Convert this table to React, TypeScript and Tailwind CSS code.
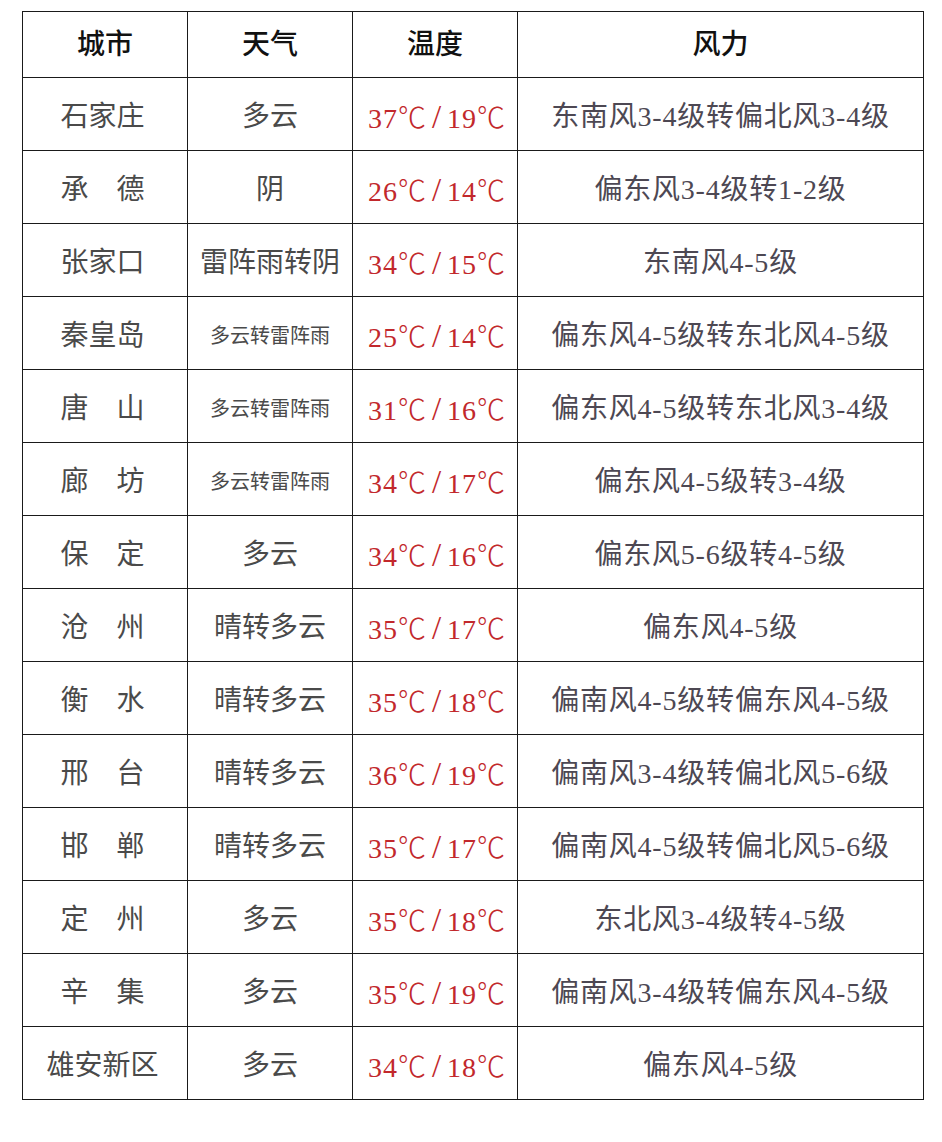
const rows: [string, string, string, string, string, boolean?][] = [
  ['石家庄', '多云', '37', '19', '东南风3-4级转偏北风3-4级'],
  ['承　德', '阴', '26', '14', '偏东风3-4级转1-2级'],
  ['张家口', '雷阵雨转阴', '34', '15', '东南风4-5级'],
  ['秦皇岛', '多云转雷阵雨', '25', '14', '偏东风4-5级转东北风4-5级', true],
  ['唐　山', '多云转雷阵雨', '31', '16', '偏东风4-5级转东北风3-4级', true],
  ['廊　坊', '多云转雷阵雨', '34', '17', '偏东风4-5级转3-4级', true],
  ['保　定', '多云', '34', '16', '偏东风5-6级转4-5级'],
  ['沧　州', '晴转多云', '35', '17', '偏东风4-5级'],
  ['衡　水', '晴转多云', '35', '18', '偏南风4-5级转偏东风4-5级'],
  ['邢　台', '晴转多云', '36', '19', '偏南风3-4级转偏北风5-6级'],
  ['邯　郸', '晴转多云', '35', '17', '偏南风4-5级转偏北风5-6级'],
  ['定　州', '多云', '35', '18', '东北风3-4级转4-5级'],
  ['辛　集', '多云', '35', '19', '偏南风3-4级转偏东风4-5级'],
  ['雄安新区', '多云', '34', '18', '偏东风4-5级'],
]

const serif = { fontFamily: '"Liberation Serif", "Noto Sans CJK SC", serif' }
const cjk = { fontFamily: '"Noto Sans CJK SC", sans-serif' }

const cell = 'border-[1.5px] border-[#1a1a1a] pt-[6px] text-center'

function Temp({ high, low }: { high: string; low: string }) {
  return (
    <span className="whitespace-nowrap tracking-[1px]">
      {high}
      <span style={cjk} className="font-light">℃</span>
      <span className="mx-[5px] text-[33px] leading-none">/</span>
      {low}
      <span style={cjk} className="font-light">℃</span>
    </span>
  )
}

export default function App() {
  return (
    <div className="min-h-[1142px] w-[942px] bg-white pt-[11px] pl-[22px]" style={serif}>
      <table className="w-[901px] table-fixed border-collapse">
        <colgroup>
          <col className="w-[165px]" />
          <col className="w-[165px]" />
          <col className="w-[165px]" />
          <col className="w-[406px]" />
        </colgroup>
        <thead>
          <tr className="h-[66px]">
            {['城市', '天气', '温度', '风力'].map((h) => (
              <th
                key={h}
                className="border-[1.5px] border-[#1a1a1a] text-center text-[28px] font-medium text-[#111]"
              >
                {h}
              </th>
            ))}
          </tr>
        </thead>
        <tbody>
          {rows.map(([city, weather, high, low, wind, small]) => (
            <tr key={city} className="h-[73px]">
              <td className={`${cell} pr-[5px] text-[28px] text-[#4a4a4a]`}>{city}</td>
              <td
                className={
                  small
                    ? `${cell} text-[20px] text-[#4a4a4a]`
                    : `${cell} text-[28px] text-[#4a4a4a]`
                }
              >
                {weather}
              </td>
              <td className={`${cell} pl-[4px] text-[28px] text-[#c2282c]`}>
                <Temp high={high} low={low} />
              </td>
              <td className={`${cell} whitespace-nowrap text-[28px] tracking-[0.8px] text-[#4d4853]`}>
                {wind}
              </td>
            </tr>
          ))}
        </tbody>
      </table>
    </div>
  )
}
